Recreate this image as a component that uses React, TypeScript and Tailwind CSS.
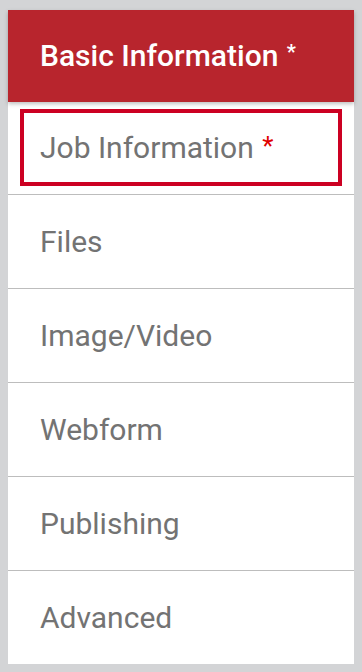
import React from "react";

const items = ["Files", "Image/Video", "Webform", "Publishing", "Advanced"];

export default function App() {
  return (
    <div
      className="w-[362px] h-[672px] bg-[#d3d4d6] pt-[10px] px-[8px] pb-[8px]"
      style={{ fontFamily: "Roboto, 'Liberation Sans', sans-serif" }}
    >
      <div className="bg-white h-[654px] flex flex-col">
        <div className="h-[92px] shrink-0 bg-[#b8252d] flex items-center pl-[32px] shadow-[0_2px_4px_rgba(0,0,0,0.25)] relative z-10">
          <span className="text-white font-medium text-[30px] leading-none">
            Basic Information <span className="text-[20px] font-bold align-[7px] ml-[1px]">*</span>
          </span>
        </div>
        <div className="h-[93px] shrink-0 border-b border-[#bdbdbd] pt-[7px] pb-[8px] px-[12px]">
          <div className="h-full border-[4px] border-[#cc0022] flex items-center pl-[16px]">
            <span className="text-[#737373] text-[30px] leading-none">
              Job Information <span className="text-[#e00000] text-[26px] align-[3px] ml-[1px]">*</span>
            </span>
          </div>
        </div>
        {items.map((t, i) => (
          <div
            key={t}
            className={
              i < items.length - 1
                ? "h-[94px] shrink-0 border-b border-[#bdbdbd] flex items-center pl-[32px]"
                : "flex-1 flex items-center pl-[32px]"
            }
          >
            <span className="text-[#737373] text-[30px] leading-none">{t}</span>
          </div>
        ))}
      </div>
    </div>
  );
}
